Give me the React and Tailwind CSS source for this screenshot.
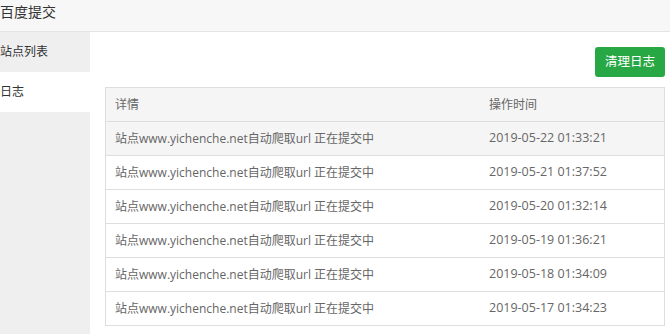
export default function App() {
  const rows = [
    "2019-05-22 01:33:21",
    "2019-05-21 01:37:52",
    "2019-05-20 01:32:14",
    "2019-05-19 01:36:21",
    "2019-05-18 01:34:09",
    "2019-05-17 01:34:23",
  ];
  const font = { fontFamily: '"Open Sans", "Noto Sans CJK SC", sans-serif' };
  return (
    <div className="w-[670px] h-[334px] bg-white overflow-hidden flex flex-col text-[#333]" style={font}>
      <div className="h-[32px] shrink-0 bg-[#f7f7f7] border-b border-[#e5e5e5] flex items-center text-[14px] leading-none pb-[7px]">
        百度提交
      </div>
      <div className="flex flex-1 min-h-0">
        <div className="w-[90px] shrink-0 bg-[#efefef] flex flex-col text-[12px]">
          <div className="h-[40px] flex items-center pb-[1px]">站点列表</div>
          <div className="h-[40px] bg-white flex items-center pb-[1px]">日志</div>
        </div>
        <div className="flex-1 pl-[15px] pr-[5px] pt-[15px]">
          <div className="flex justify-end">
            <button className="w-[70px] h-[30px] rounded-[3px] bg-[#28a745] text-white text-[12.5px] flex items-center justify-center">
              清理日志
            </button>
          </div>
          <div className="mt-[10px] border border-[#dedede] text-[#666]">
            <div className="h-[33px] flex items-center bg-[#f5f5f5] text-[12px]">
              <div className="w-[375px] pl-[9px]">详情</div>
              <div className="pl-[8px]">操作时间</div>
            </div>
            {rows.map((t, i) => (
              <div
                key={t}
                className={`h-[34px] flex items-center border-t border-[#dedede] ${i === 0 ? "bg-[#f5f5f5]" : "bg-white"}`}
              >
                <div className="w-[375px] pl-[9px] whitespace-nowrap text-[12px]">站点www.yichenche.net自动爬取url 正在提交中</div>
                <div className="pl-[8px] whitespace-nowrap text-[12.5px]">{t}</div>
              </div>
            ))}
          </div>
        </div>
      </div>
    </div>
  );
}
